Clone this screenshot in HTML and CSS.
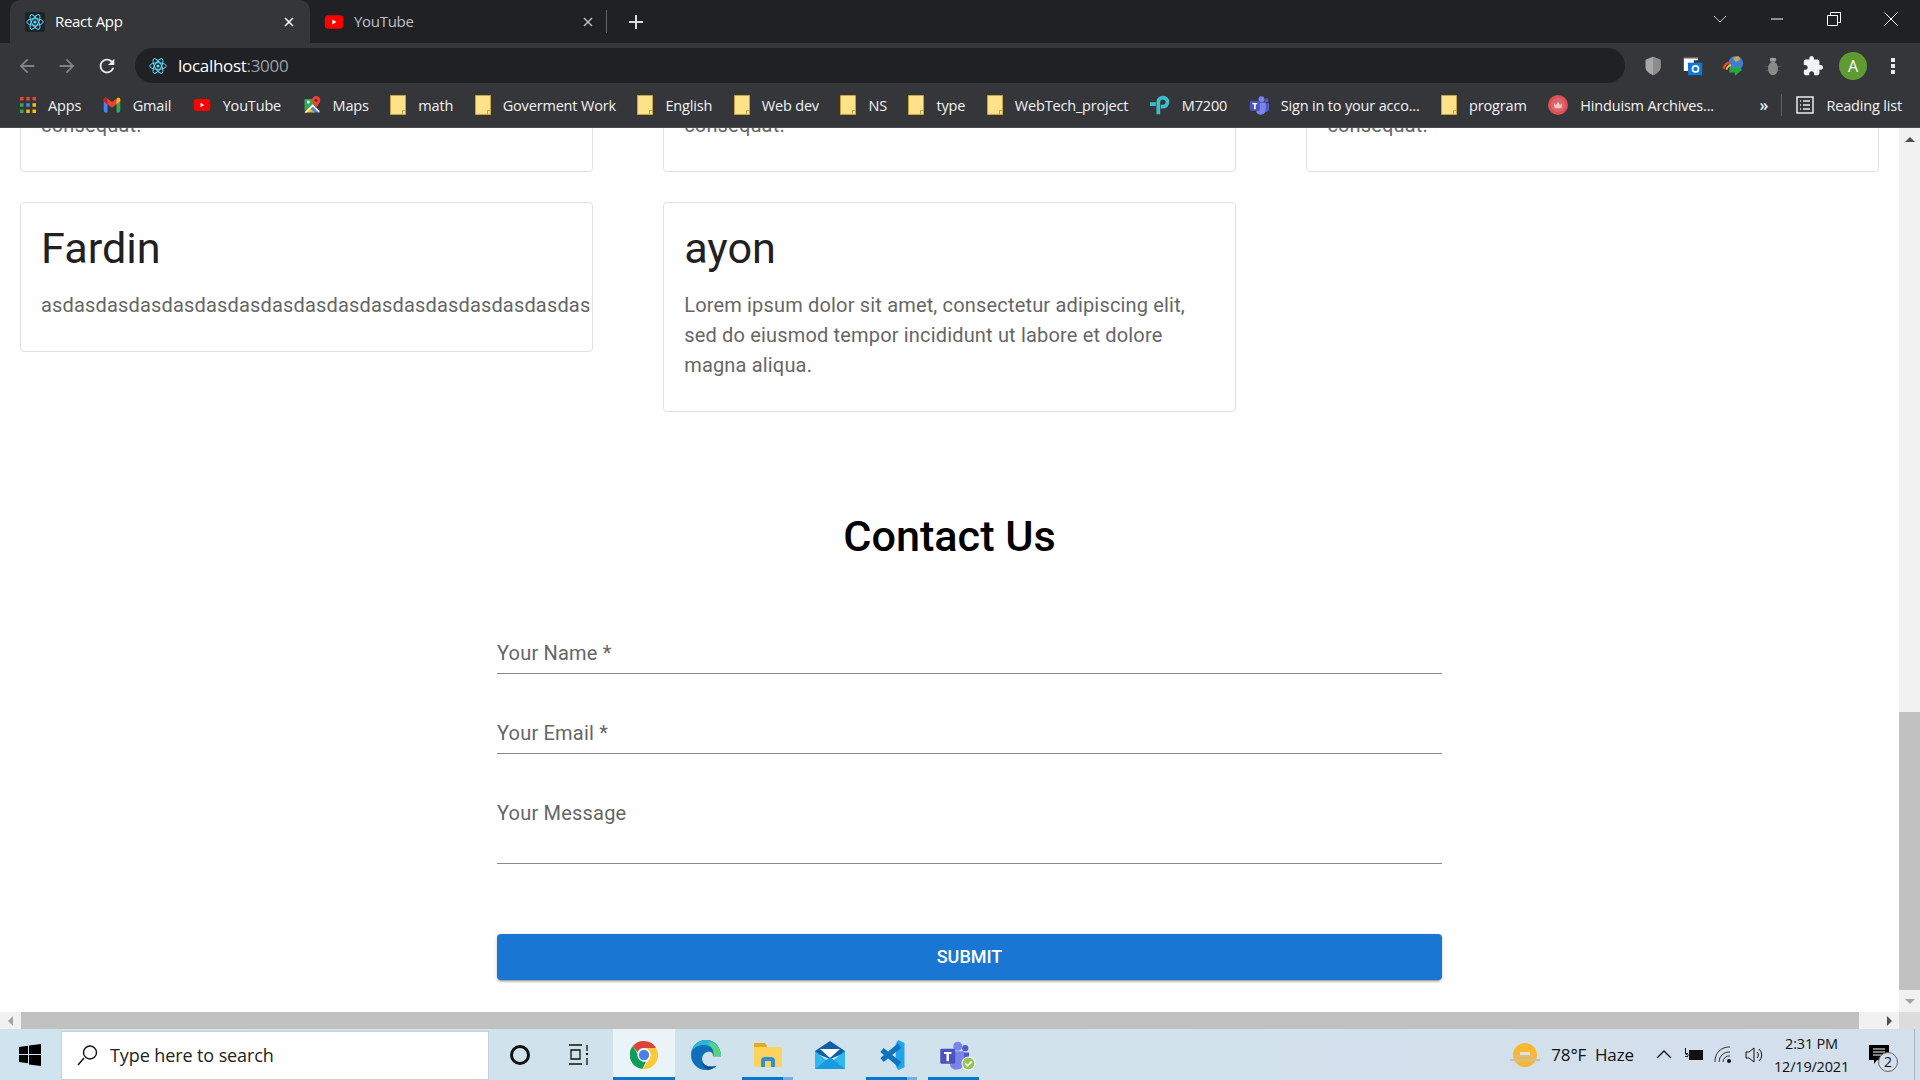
FILE: index.html
```html
<!DOCTYPE html>
<html>
	<head>
		<meta charset="utf-8" />
		<title>React App</title>
		<link rel="stylesheet" href="styles.css">
	</head>
	<body>
		<svg class="defs">
			<symbol id="react" viewBox="0 0 24 24">
				<g fill="none" stroke="#61dafb" stroke-width="1.3">
					<ellipse cx="12" cy="12" rx="11" ry="4.4"/>
					<ellipse cx="12" cy="12" rx="11" ry="4.4" transform="rotate(60 12 12)"/>
					<ellipse cx="12" cy="12" rx="11" ry="4.4" transform="rotate(120 12 12)"/>
				</g>
				<circle cx="12" cy="12" r="2.1" fill="#61dafb"/>
			</symbol>
			<symbol id="yt" viewBox="0 0 24 24">
				<rect x="1" y="4" width="22" height="16" rx="4" fill="#f00"/>
				<path d="M10 9l5 3-5 3z" fill="#fff"/>
			</symbol>
			<symbol id="apps" viewBox="0 0 18 18">
				<path fill="#ea4335" d="M0 0h4v4H0zM7 0h4v4H7zM14 0h4v4h-4z"/>
				<path fill="#34a853" d="M0 7h4v4H0zM0 14h4v4H0z"/>
				<path fill="#4285f4" d="M7 7h4v4H7z"/>
				<path fill="#fbbc04" d="M14 7h4v4h-4zM7 14h4v4H7zM14 14h4v4h-4z"/>
			</symbol>
			<symbol id="gmail" viewBox="0 0 24 20">
				<path fill="#4285f4" d="M1 5v13c0 1 .7 2 2 2h3V9z"/>
				<path fill="#34a853" d="M23 5v13c0 1-.7 2-2 2h-3V9z"/>
				<path fill="#ea4335" d="M1 2.500C1 .5 3.500-.5 5 .7L12 6l7-5.300C20.500-.5 23 .5 23 2.500V5l-5 4-6 4.500L6 9 1 5z"/>
				<path fill="#c5221f" d="M1 2.500V5l5 4V3.300L5 .7C3.500-.5 1 .5 1 2.500z"/>
				<path fill="#fbbc04" d="M23 2.500V5l-5 4V3.300l1-2.600C20.500-.5 23 .5 23 2.500z"/>
			</symbol>
			<symbol id="maps" viewBox="0 0 24 24">
				<path fill="#34a853" d="M2 4h14v10L2 20z"/>
				<path fill="#fbbc04" d="M2 22l10-10 6 6-3 4z"/>
				<path fill="#4285f4" d="M14 14l7 7v1h-6l-5-5z"/>
				<path fill="#fff" d="M2 22l11-11 9 9v2h-1l-8-8-8 8z"/>
				<path fill="#ea4335" d="M17.500 0a5.500 5.500 0 0 0-5.500 5.500C12 9.500 17.500 14 17.500 17c0-3 5.500-7.500 5.500-11.500A5.500 5.500 0 0 0 17.500 0z"/>
				<circle cx="17.500" cy="5.500" r="2" fill="#8f1d16"/>
				<circle cx="7" cy="8" r="2" fill="#fff"/>
			</symbol>
			<symbol id="folder" viewBox="0 0 16 20">
				<path fill="#fde28a" stroke="#c9a33a" d="M.5.500h15v19H.5z"/>
				<path fill="#c9a33a" d="M12 19v-4h3.500v1H13v3z"/>
			</symbol>
			<symbol id="tplink" viewBox="0 0 24 24">
				<path fill="none" stroke="#3dbfcb" stroke-width="4.500" d="M10 23V8.500a5.500 5.500 0 1 1 5.500 5.500h-2.500M0 11h7"/>
			</symbol>
			<symbol id="teams" viewBox="0 0 24 24">
				<circle cx="15" cy="5" r="3.600" fill="#7b83eb"/>
				<circle cx="21" cy="6.500" r="2.500" fill="#5059c9"/>
				<path fill="#5059c9" d="M17 10h7v7a4 4 0 0 1-7 2z"/>
				<path fill="#7b83eb" d="M9 9h11v9a6 6 0 0 1-11 3z"/>
				<rect x="1" y="7" width="12" height="12" rx="1" fill="#4b53bc"/>
				<path fill="#fff" d="M4 9.500h6v1.600H8V17H6v-5.900H4z"/>
			</symbol>
			<symbol id="hindu" viewBox="0 0 24 24">
				<circle cx="12" cy="12" r="12" fill="#e04f55"/>
				<circle cx="12" cy="12" r="8.500" fill="#d9666a"/>
				<path fill="#f7c5c5" d="M7 10l2.500 2L12 8l2.500 4L17 10l-1 6H8z"/>
			</symbol>
			<symbol id="shield" viewBox="0 0 24 24">
				<path fill="#a8a8a8" d="M12 1l9 3.500v9c0 4-4 7.500-9 9.500-5-2-9-5.500-9-9.500v-9z"/>
				<path fill="#8d8d8d" d="M12 1l9 3.500v9c0 4-4 7.500-9 9.500z"/>
			</symbol>
			<symbol id="outlook" viewBox="0 0 24 24">
				<path fill="#fff" d="M1 2h17v3H1zM1 5h12v13H1z"/>
				<rect x="6" y="8" width="17" height="15" fill="#0f78d4"/>
				<circle cx="15" cy="15.500" r="3.600" fill="none" stroke="#fff" stroke-width="2"/>
				<path fill="#555" d="M1 2h17v1H1z"/>
			</symbol>
			<symbol id="idm" viewBox="0 0 24 24">
				<circle cx="15" cy="9" r="8" fill="#3d7fd6"/>
				<path fill="#c9a84a" d="M12 3l6-2 2 4-5 3z"/>
				<path fill="none" stroke="#e8452c" stroke-width="2.500" d="M2 15a8 8 0 0 1 7-7"/>
				<path fill="none" stroke="#f4c32a" stroke-width="2" d="M5 16a6 6 0 0 1 5-5"/>
				<path fill="#27a83f" d="M8 14h6v-3l8 5-8 7v-4H8z"/>
			</symbol>
			<symbol id="bug" viewBox="0 0 24 24">
				<path fill="#555" d="M2 12h20v1H2zM3 17h18v1H3z"/>
				<ellipse cx="12" cy="15" rx="6" ry="8" fill="#8a8a8a"/>
				<rect x="8" y="2" width="8" height="5" rx="2.500" fill="#9b9b9b"/>
			</symbol>
			<symbol id="puzzle" viewBox="0 0 24 24">
				<path fill="#f1f3f4" d="M20.500 11H19V7c0-1.100-.9-2-2-2h-4V3.500C13 2.120 11.880 1 10.500 1S8 2.120 8 3.500V5H4c-1.100 0-1.990.9-1.990 2v3.800H3.500c1.490 0 2.700 1.210 2.700 2.700s-1.210 2.700-2.700 2.700H2V20c0 1.100.9 2 2 2h3.800v-1.500c0-1.490 1.210-2.700 2.700-2.700 1.490 0 2.700 1.210 2.700 2.700V22H17c1.100 0 2-.9 2-2v-4h1.500c1.380 0 2.500-1.120 2.500-2.500S21.880 11 20.500 11z"/>
			</symbol>
			<symbol id="chrome" viewBox="0 0 24 24">
				<path fill="#db4437" d="M12 0a12 12 0 0 1 10.400 6H12a6 6 0 0 0-5.600 3.700L2.500 4.300A12 12 0 0 1 12 0z"/>
				<path fill="#0f9d58" d="M2.500 4.300L7 12a5.500 5.500 0 0 0 6.600 5.700l-3 6.200A12 12 0 0 1 2.500 4.300z"/>
				<path fill="#fcc934" d="M22.400 6H12a6 6 0 0 1 4.800 9.200l-6.200 8.700A12 12 0 0 0 22.400 6z"/>
				<circle cx="12" cy="12" r="5.600" fill="#fff"/>
				<circle cx="12" cy="12" r="4.400" fill="#4a80e8"/>
			</symbol>
			<symbol id="edge" viewBox="0 0 24 24">
				<path fill="#0f6fb8" d="M12 0C5 0 0 5.500 0 12c0 7 5.500 12 12 12 3 0 6-1 8.500-3.500-4 1.500-9.500 1-11-3C8 14 9.500 10.500 13 9.500c3-.8 5 1 4.500 3.500H24C24 6 19 0 12 0z"/>
				<path fill="#2ab5d8" d="M12 0C6 0 1.500 4 .5 9c3-4.500 9-6 13-4.500 4.500 1.500 6 5 5.500 8.500H24C24 6 19 0 12 0z"/>
				<path fill="#5bd27f" d="M17 2c4 2 7 6 7 11h-6c.5-4-1-8-5-10 1.500-.8 2.500-1.300 4-1z"/>
				<path fill="#0a4f94" d="M9.500 17.500c1.500 4 7 4.500 11 3-2 1.800-4 2.800-6.500 3.200-3.500-1.200-5.500-3.700-4.500-6.200z"/>
			</symbol>
			<symbol id="explorer" viewBox="0 0 28 24">
				<path fill="#e5a823" d="M0 1a1 1 0 0 1 1-1h10l2 3v2H0z"/>
				<path fill="#fcd35f" d="M0 4h28v19a1 1 0 0 1-1 1H1a1 1 0 0 1-1-1z"/>
				<path fill="none" stroke="#2d8fd5" stroke-width="4" d="M9 24v-6a2 2 0 0 1 2-2h6a2 2 0 0 1 2 2v6"/>
			</symbol>
			<symbol id="mail" viewBox="0 0 30 28">
				<path fill="#0f5ea8" d="M15 0l15 10v2L15 18 0 12v-2z"/>
				<path fill="#fff" d="M5 8h20l-10 9z"/>
				<path fill="#30b7ee" d="M0 10l15 12 15-12v18H0z"/>
				<path fill="#1a9ae0" d="M0 28l15-12 15 12z"/>
			</symbol>
			<symbol id="vscode" viewBox="0 0 24 24">
				<path fill="#22a3ea" d="M17 0l5 2.300v19.400L17 24l-2-3V3z"/>
				<path fill="none" stroke="#0e75bd" stroke-width="4.200" d="M18 4.500L4 16M4 8l14 11.500"/>
			</symbol>
			<symbol id="win" viewBox="0 0 22 22">
				<path fill="#000" d="M0 3l9-1.300V10H0zM10 1.500L22 0v10H10zM0 11h9v8.300L0 18zM10 11h12v11l-12-1.600z"/>
			</symbol>
			<symbol id="sun" viewBox="0 0 30 24">
				<circle cx="15" cy="12" r="12" fill="#fbb731"/>
				<path fill="#ccbfa5" d="M0 16h30v2H0zM6 12h18v2H6z"/>
				<path fill="#e8dfcd" d="M10 9h10v3H10z"/>
			</symbol>
		</svg>

		<div class="tabstrip">
			<div class="tab active">
				<span class="favicon-box"><svg class="icon-18"><use href="#react"/></svg></span>
				<span class="tab-title">React App</span>
				<svg class="tab-x" viewBox="0 0 10 10"><path d="M1 1l8 8M9 1L1 9" stroke="#fff" stroke-width="1.600"/></svg>
			</div>
			<div class="tab">
				<svg class="icon-20"><use href="#yt"/></svg>
				<span class="tab-title dim">YouTube</span>
				<svg class="tab-x" viewBox="0 0 10 10"><path d="M1 1l8 8M9 1L1 9" stroke="#bdc1c6" stroke-width="1.400"/></svg>
			</div>
			<div class="tab-plus">
				<svg class="icon-16" viewBox="0 0 16 16"><path d="M8 1v14M1 8h14" stroke="#dadce0" stroke-width="2"/></svg>
			</div>
			<div class="window-btns">
				<svg class="caption-chevron" viewBox="0 0 14 8"><path d="M1 1l6 6 6-6" fill="none" stroke="#bdc1c6"/></svg>
				<div class="caption"><svg class="icon-14" viewBox="0 0 14 14"><path d="M1 7h12" stroke="#fff"/></svg></div>
				<div class="caption"><svg class="icon-14" viewBox="0 0 14 14"><path d="M.5 3.500h10v10H.5zM3.500 3.500v-3h10v10h-3" fill="none" stroke="#fff"/></svg></div>
				<div class="caption"><svg class="icon-14" viewBox="0 0 14 14"><path d="M.5.500l13 13M13.500.500l-13 13" stroke="#fff"/></svg></div>
			</div>
		</div>

		<div class="toolbar">
			<div class="tool-btn"><svg class="icon-22" viewBox="0 0 24 24"><path fill="#7f8286" d="M20 11H7.830l5.590-5.590L12 4l-8 8 8 8 1.410-1.410L7.830 13H20v-2z"/></svg></div>
			<div class="tool-btn"><svg class="icon-22" viewBox="0 0 24 24"><path fill="#7f8286" d="M12 4l-1.410 1.410L16.170 11H4v2h12.170l-5.580 5.590L12 20l8-8z"/></svg></div>
			<div class="tool-btn"><svg class="icon-22" viewBox="0 0 24 24"><path fill="#e8eaed" d="M17.650 6.350C16.200 4.900 14.210 4 12 4c-4.420 0-7.990 3.580-7.990 8s3.570 8 7.990 8c3.730 0 6.840-2.550 7.730-6h-2.080c-.82 2.330-3.040 4-5.650 4-3.310 0-6-2.690-6-6s2.690-6 6-6c1.660 0 3.140.69 4.220 1.780L13 11h7V4l-2.350 2.350z"/></svg></div>
			<div class="omnibox">
				<svg class="icon-18"><use href="#react"/></svg>
				<span class="url">localhost<span class="url-port">:3000</span></span>
			</div>
			<div class="ext-btns">
				<div class="tool-btn"><svg class="icon-20"><use href="#shield"/></svg></div>
				<div class="tool-btn"><svg class="icon-20"><use href="#outlook"/></svg></div>
				<div class="tool-btn"><svg class="icon-22"><use href="#idm"/></svg></div>
				<div class="tool-btn"><svg class="icon-20"><use href="#bug"/></svg></div>
				<div class="tool-btn"><svg class="icon-22"><use href="#puzzle"/></svg></div>
				<div class="tool-btn"><span class="avatar">A</span></div>
				<div class="tool-btn"><svg class="icon-20" viewBox="0 0 20 20"><path fill="#e8eaed" d="M8 2h4v4H8zM8 8h4v4H8zM8 14h4v4H8z"/></svg></div>
			</div>
		</div>

		<div class="bookmarks">
			<a class="bm"><svg class="icon-16b"><use href="#apps"/></svg>Apps</a>
			<a class="bm"><svg class="icon-18"><use href="#gmail"/></svg>Gmail</a>
			<a class="bm"><svg class="icon-18"><use href="#yt"/></svg>YouTube</a>
			<a class="bm"><svg class="icon-18"><use href="#maps"/></svg>Maps</a>
			<a class="bm"><svg class="icon-folder"><use href="#folder"/></svg>math</a>
			<a class="bm"><svg class="icon-folder"><use href="#folder"/></svg>Goverment Work</a>
			<a class="bm"><svg class="icon-folder"><use href="#folder"/></svg>English</a>
			<a class="bm"><svg class="icon-folder"><use href="#folder"/></svg>Web dev</a>
			<a class="bm"><svg class="icon-folder"><use href="#folder"/></svg>NS</a>
			<a class="bm"><svg class="icon-folder"><use href="#folder"/></svg>type</a>
			<a class="bm"><svg class="icon-folder"><use href="#folder"/></svg>WebTech_project</a>
			<a class="bm"><svg class="icon-20"><use href="#tplink"/></svg>M7200</a>
			<a class="bm"><svg class="icon-20"><use href="#teams"/></svg>Sign in to your acco...</a>
			<a class="bm"><svg class="icon-folder"><use href="#folder"/></svg>program</a>
			<a class="bm"><svg class="icon-20"><use href="#hindu"/></svg>Hinduism Archives...</a>
			<div class="bm-end">
				<span class="bm-more">»</span>
				<span class="bm-sep"></span>
				<a class="bm"><svg class="icon-18" viewBox="0 0 18 18"><path fill="none" stroke="#e8eaed" stroke-width="1.500" d="M1 1h16v16H1zM7 5h7M7 9h7M7 13h7M4 5h1M4 9h1M4 13h1"/></svg>Reading list</a>
			</div>
		</div>

		<div class="viewport">
			<div class="page">
				<div class="cards">
					<div class="card"><p class="card-text">consequat.</p></div>
					<div class="card"><p class="card-text">consequat.</p></div>
					<div class="card"><p class="card-text">consequat.</p></div>
					<div class="card">
						<h2 class="card-title">Fardin</h2>
						<p class="card-text">asdasdasdasdasdasdasdasdasdasdasdasdasdasdasdasdas</p>
					</div>
					<div class="card">
						<h2 class="card-title">ayon</h2>
						<p class="card-text">Lorem ipsum dolor sit amet, consectetur adipiscing elit, sed do eiusmod tempor incididunt ut labore et dolore magna aliqua.</p>
					</div>
				</div>
				<h1 class="contact-title">Contact Us</h1>
				<form class="contact-form">
					<div class="field">Your Name *</div>
					<div class="field">Your Email *</div>
					<div class="field field-message">Your Message</div>
					<div class="submit">SUBMIT</div>
				</form>
			</div>
			<div class="vscroll">
				<div class="sb-btn"><span class="arrow-up"></span></div>
				<div class="vthumb"></div>
				<div class="sb-btn"><span class="arrow-down"></span></div>
			</div>
		</div>

		<div class="hscroll">
			<div class="sb-btn"><span class="arrow-left"></span></div>
			<div class="hthumb"></div>
			<div class="hscroll-end"><span class="arrow-right"></span></div>
			<div class="sb-corner"></div>
		</div>

		<div class="taskbar">
			<div class="start"><svg class="icon-22"><use href="#win"/></svg></div>
			<div class="search">
				<svg class="icon-22" viewBox="0 0 22 22"><path fill="none" stroke="#111" stroke-width="1.400" d="M8 14L2 21M14 2a6.500 6.500 0 1 0 0 13 6.500 6.500 0 0 0 0-13z"/></svg>
				<span>Type here to search</span>
			</div>
			<div class="task"><span class="cortana"></span></div>
			<div class="task task-view"><svg class="icon-22" viewBox="0 0 22 22"><path fill="none" stroke="#111" stroke-width="1.300" d="M1 1h13M1 20h13M3 6h9v9H3zM19 1v6M19 14v7"/><path fill="#111" d="M18 9h2v2h-2z"/></svg></div>
			<div class="task task-open task-active"><svg class="icon-28"><use href="#chrome"/></svg></div>
			<div class="task"><svg class="icon-30"><use href="#edge"/></svg></div>
			<div class="task task-open task-stack"><svg class="icon-28"><use href="#explorer"/></svg></div>
			<div class="task"><svg class="icon-30"><use href="#mail"/></svg></div>
			<div class="task task-open task-stack"><svg class="icon-30"><use href="#vscode"/></svg></div>
			<div class="task task-open">
				<svg class="icon-30"><use href="#teams"/></svg>
				<svg class="teams-check" viewBox="0 0 14 14"><circle cx="7" cy="7" r="6.500" fill="#fff"/><circle cx="7" cy="7" r="5.500" fill="#92c353"/><path d="M4 7l2.200 2.200L10 5" fill="none" stroke="#fff" stroke-width="1.500"/></svg>
			</div>
			<div class="tray">
				<svg class="tray-sun"><use href="#sun"/></svg>
				<span class="weather">78°F&nbsp;&nbsp;Haze</span>
				<div class="tray-icon"><svg class="icon-16" viewBox="0 0 16 16"><path d="M1 11l7-7 7 7" fill="none" stroke="#111" stroke-width="1.300"/></svg></div>
				<div class="tray-icon"><svg class="icon-20" viewBox="0 0 20 20"><path fill="#111" d="M5 5h14v10H5zM1 8h3v1H1zM1 11h3v1H1z"/><path fill="none" stroke="#111" d="M1.500 3v5a2 2 0 0 0 2 2h2"/></svg></div>
				<div class="tray-icon"><svg class="icon-20" viewBox="0 0 20 20"><path fill="none" stroke="#333" d="M1 17A14 14 0 0 1 16 2M5 17a10 10 0 0 1 11-10M9 17a6 6 0 0 1 7-6"/><circle cx="15" cy="16" r="2" fill="#111"/></svg></div>
				<div class="tray-icon"><svg class="icon-20" viewBox="0 0 20 20"><path fill="none" stroke="#111" d="M2 7h3l5-4v14l-5-4H2zM13 7a4 4 0 0 1 0 6M15 4a8 8 0 0 1 0 12"/></svg></div>
				<div class="clock">
					<span>2:31 PM</span>
					<span>12/19/2021</span>
				</div>
				<div class="notify">
					<svg class="icon-20" viewBox="0 0 20 20"><path fill="#000" d="M0 0h20v15H8l-3 4v-4H0z"/><path stroke="#fff" d="M4 4h12M4 7h12M4 10h12"/></svg>
					<span class="notify-badge">2</span>
				</div>
				<span class="desk-line"></span>
			</div>
		</div>
	</body>
</html>
```

FILE: styles.css
```css
html,body,h1,h2,p{
	margin: 0;
	padding: 0;
}
html,body{
	width: 1920px;
	height: 1080px;
	overflow: hidden;
}
body{
	display: flex;
	flex-direction: column;
	background: #fff;
	font-family: "Roboto", "Liberation Sans", sans-serif;
}
.defs{
	display: none;
}
svg{
	flex: none;
	display: block;
}
.icon-14{width: 14px;height: 14px;}
.icon-16{width: 16px;height: 16px;}
.icon-16b{width: 16px;height: 16px;}
.icon-18{width: 18px;height: 18px;}
.icon-20{width: 20px;height: 20px;}
.icon-22{width: 22px;height: 22px;}
.icon-28{width: 28px;height: 28px;}
.icon-30{width: 30px;height: 30px;}
.icon-folder{width: 16px;height: 20px;}

/* tabs */
.tabstrip{
	height: 43px;
	display: flex;
	padding-left: 10px;
	background: #202124;
	flex: none;
}
.tab{
	width: 298px;
	display: flex;
	align-items: center;
	padding: 0 14px;
	box-sizing: border-box;
	border-right: 1px solid transparent;
	position: relative;
}
.tab::after{
	content: "";
	position: absolute;
	right: 0;
	top: 10px;
	height: 23px;
	width: 1px;
	background: #5f6368;
}
.tab.active{
	width: 300px;
	padding: 0 15px;
	background: #35363a;
	border-radius: 10px 10px 0 0;
}
.tab.active::after{
	display: none;
}
.favicon-box{
	width: 20px;
	height: 20px;
	background: #1f2326;
	border-radius: 2px;
	display: flex;
	align-items: center;
	justify-content: center;
}
.tab-title{
	margin: -2px 0 0 10px;
	font: 15px "Open Sans", sans-serif;
	letter-spacing: -0.3px;
	color: #fff;
}
.tab-title.dim{
	color: #bdc1c6;
}
.tab-x{
	width: 10px;
	height: 10px;
	margin-left: auto;
}
.tab-plus{
	width: 56px;
	display: flex;
	align-items: center;
	justify-content: center;
}
.window-btns{
	margin-left: auto;
	display: flex;
	align-items: center;
}
.caption-chevron{
	width: 14px;
	height: 8px;
	margin-right: 21px;
	margin-top: -5px;
}
.caption{
	width: 57.33px;
	height: 38px;
	margin-top: -5px;
	display: flex;
	align-items: center;
	justify-content: center;
}

/* toolbar */
.toolbar{
	height: 40px;
	flex: none;
	box-sizing: border-box;
	padding: 5px 0 0 7px;
	display: flex;
	background: #35363a;
}
.tool-btn{
	width: 40px;
	height: 35px;
	flex: none;
	display: flex;
	align-items: center;
	justify-content: center;
}
.omnibox{
	width: 1490px;
	height: 35px;
	margin-left: 8px;
	padding-left: 14px;
	box-sizing: border-box;
	display: flex;
	align-items: center;
	background: #202124;
	border-radius: 18px;
}
.url{
	margin-left: 11px;
	font: 17px "Open Sans", sans-serif;
	letter-spacing: -0.3px;
	color: #fff;
}
.url-port{
	color: #9aa0a6;
}
.ext-btns{
	display: flex;
	margin-left: 8px;
}
.avatar{
	width: 28px;
	height: 28px;
	border-radius: 50%;
	background: #5f9a33;
	color: #fff;
	font: 16px/28px "Open Sans", sans-serif;
	text-align: center;
}

/* bookmarks */
.bookmarks{
	height: 45px;
	flex: none;
	box-sizing: border-box;
	padding-left: 20px;
	display: flex;
	align-items: center;
	gap: 21.5px;
	background: #35363a;
	border-bottom: 1px solid #4a4b4f;
}
.bm{
	display: flex;
	align-items: center;
	gap: 12px;
	font: 14.5px "Open Sans", sans-serif;
	letter-spacing: -0.17px;
	color: #f1f3f4;
	white-space: nowrap;
}
.bm-end{
	margin-left: auto;
	display: flex;
	align-items: center;
	padding-right: 18px;
}
.bm-more{
	color: #e8eaed;
	font: 600 16px "Open Sans", sans-serif;
}
.bm-sep{
	width: 1px;
	height: 22px;
	margin: 0 14px 0 13px;
	background: #5f6368;
}

/* page */
.viewport{
	height: 884px;
	flex: none;
	display: flex;
}
.page{
	flex: 1;
	overflow: hidden;
}
.cards{
	display: grid;
	grid-template-columns: repeat(3, 572.6px);
	column-gap: 70.6px;
	row-gap: 30px;
	align-items: start;
	margin: -39px 0 0 20px;
}
.card{
	border: 1px solid #e0e0e0;
	border-radius: 4px;
	padding: 20px 20px 31px;
	overflow: hidden;
}
.card-title{
	padding-top: 2px;
	font-size: 43.2px;
	font-weight: 400;
	line-height: 47px;
	margin-bottom: 18px;
	color: #212121;
}
.card-text{
	font-size: 20px;
	line-height: 30px;
	letter-spacing: 0.17px;
	color: #666;
}
.contact-title{
	margin-top: 99px;
	text-align: center;
	font-size: 43.2px;
	font-weight: 500;
	line-height: 52px;
	color: #000;
}
.contact-form{
	width: 945px;
	margin: 78px 0 0 497px;
}
.field{
	height: 32px;
	margin-bottom: 47px;
	border-bottom: 1px solid #8a8a8a;
	font-size: 20px;
	line-height: 24px;
	letter-spacing: 0.2px;
	color: #666;
}
.field-message{
	height: 62px;
	margin-bottom: 70px;
}
.submit{
	height: 46px;
	background: #1976d2;
	border-radius: 4px;
	color: #fff;
	font-size: 18px;
	font-weight: 500;
	line-height: 46px;
	text-align: center;
	box-shadow: 0 3px 1px -2px rgba(0,0,0,0.2), 0 2px 2px 0 rgba(0,0,0,0.14), 0 1px 5px 0 rgba(0,0,0,0.12);
}

/* scrollbars */
.vscroll{
	width: 21px;
	flex: none;
	display: flex;
	flex-direction: column;
	background: #f1f1f1;
}
.sb-btn{
	width: 21px;
	height: 22px;
	flex: none;
	display: flex;
	align-items: center;
	justify-content: center;
}
.vthumb{
	height: 278px;
	margin-top: auto;
	background: #c1c1c1;
}
.arrow-up,.arrow-down,.arrow-left,.arrow-right{
	width: 0;
	height: 0;
	border: 5px solid transparent;
}
.arrow-up{
	border-top-width: 0;
	border-bottom: 5px solid #505050;
}
.arrow-down{
	border-bottom-width: 0;
	border-top: 5px solid #a3a3a3;
}
.arrow-left{
	border-left-width: 0;
	border-right: 5px solid #a3a3a3;
}
.arrow-right{
	border-right-width: 0;
	border-left: 5px solid #505050;
}
.hscroll{
	height: 17px;
	flex: none;
	display: flex;
	background: #f1f1f1;
}
.hscroll .sb-btn{
	height: 17px;
}
.hthumb{
	width: 1838px;
	background: #c1c1c1;
}
.hscroll-end{
	width: 40px;
	display: flex;
	align-items: center;
	justify-content: flex-end;
	padding-right: 7px;
	box-sizing: border-box;
}
.sb-corner{
	width: 21px;
	background: #dcdcdc;
}

/* taskbar */
.taskbar{
	height: 51px;
	flex: none;
	display: flex;
	align-items: stretch;
	background: linear-gradient(90deg, #cfe4ee, #d0e2ec 50%, #d4dfec);
}
.start{
	width: 60px;
	margin-right: 1px;
	display: flex;
	align-items: center;
	justify-content: center;
}
.search{
	width: 428px;
	margin-top: 2px;
	box-sizing: border-box;
	border: 1px solid #c8d0d6;
	background: #fff;
	display: flex;
	align-items: center;
	padding: 0 0 2px 14px;
	gap: 12px;
	font: 18px "Open Sans", sans-serif;
	letter-spacing: -0.1px;
	color: #222;
}
.task{
	width: 62px;
	display: flex;
	align-items: center;
	justify-content: center;
	position: relative;
}
.task-view{
	padding-right: 6px;
	box-sizing: border-box;
}
.cortana{
	width: 14px;
	height: 14px;
	border: 3px solid #111;
	border-radius: 50%;
}
.task-active{
	background: #eaf4f8;
}
.task-open::after{
	content: "";
	position: absolute;
	left: 5px;
	right: 6px;
	bottom: 0;
	height: 3px;
	background: #0078d4;
}
.task-active::after{
	left: 0;
	right: 0;
}
.task-stack::after{
	background: linear-gradient(90deg, #0078d4 80%, #6db2e8 80%);
}
.teams-check{
	position: absolute;
	left: 38px;
	top: 27px;
	width: 15px;
	height: 15px;
}
.tray{
	margin-left: auto;
	display: flex;
	align-items: center;
	color: #111;
}
.tray-sun{
	width: 30px;
	height: 24px;
}
.weather{
	margin: 0 15px 0 11px;
	font: 17px "Open Sans", sans-serif;
	letter-spacing: -0.1px;
}
.tray-icon{
	width: 30px;
	display: flex;
	justify-content: center;
}
.clock{
	width: 85px;
	padding-top: 2px;
	display: flex;
	flex-direction: column;
	align-items: center;
	gap: 3px;
	font: 14.5px/20px "Open Sans", sans-serif;
	letter-spacing: -0.2px;
}
.notify{
	width: 50px;
	display: flex;
	justify-content: center;
	position: relative;
}
.notify-badge{
	position: absolute;
	left: 24px;
	top: 7px;
	width: 20px;
	height: 20px;
	box-sizing: border-box;
	border: 1px solid #666;
	border-radius: 50%;
	background: #d4dfec;
	font: 14px/18px "Open Sans", sans-serif;
	text-align: center;
}
.desk-line{
	width: 1px;
	height: 51px;
	margin: 0 5px 0 10px;
	background: #a9b4c0;
}
```
